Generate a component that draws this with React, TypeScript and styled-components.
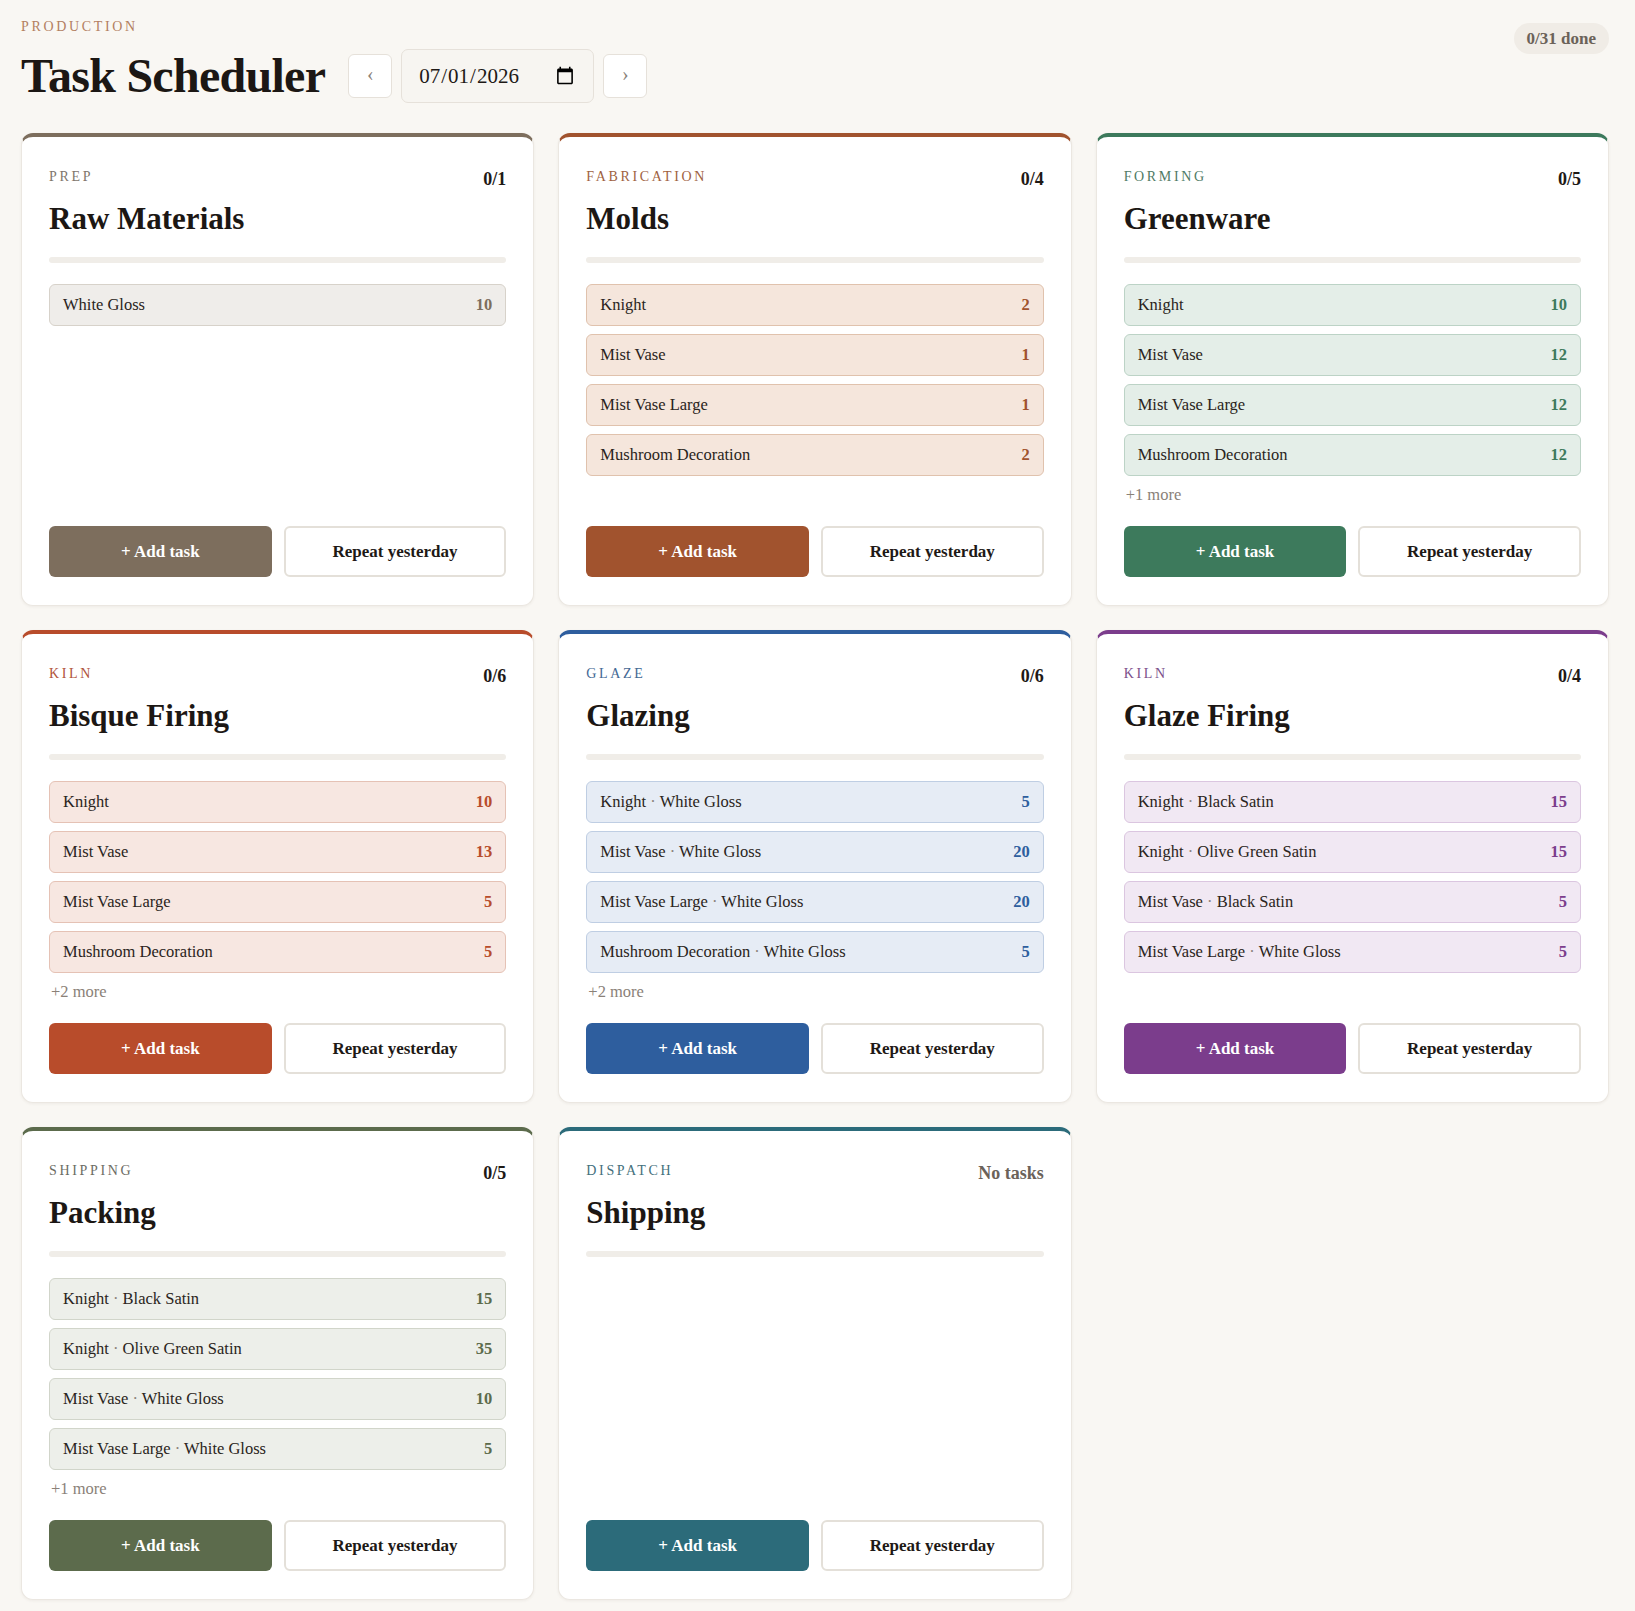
import React from "react";
import styled, { createGlobalStyle } from "styled-components";

type Task = { product: string; variant?: string; qty: number };

type Stage = {
  id: string;
  group: string;
  title: string;
  accent: string;
  label: string;
  rowBg: string;
  rowBorder: string;
  tasks: Task[];
  more?: number;
};

const serif = `"Liberation Serif", "Times New Roman", Times, serif`;

const stages: Stage[] = [
  {
    id: "raw",
    group: "PREP",
    title: "Raw Materials",
    accent: "#7d6e5d",
    label: "#7f766c",
    rowBg: "#efedea",
    rowBorder: "#d7d2ca",
    tasks: [{ product: "White Gloss", qty: 10 }],
  },
  {
    id: "molds",
    group: "FABRICATION",
    title: "Molds",
    accent: "#a1532e",
    label: "#a0623f",
    rowBg: "#f5e6dc",
    rowBorder: "#e0c2ad",
    tasks: [
      { product: "Knight", qty: 2 },
      { product: "Mist Vase", qty: 1 },
      { product: "Mist Vase Large", qty: 1 },
      { product: "Mushroom Decoration", qty: 2 },
    ],
  },
  {
    id: "greenware",
    group: "FORMING",
    title: "Greenware",
    accent: "#3d7a5c",
    label: "#4f7a65",
    rowBg: "#e4eee8",
    rowBorder: "#bcd3c6",
    tasks: [
      { product: "Knight", qty: 10 },
      { product: "Mist Vase", qty: 12 },
      { product: "Mist Vase Large", qty: 12 },
      { product: "Mushroom Decoration", qty: 12 },
    ],
    more: 1,
  },
  {
    id: "bisque",
    group: "KILN",
    title: "Bisque Firing",
    accent: "#b84c2b",
    label: "#b0523a",
    rowBg: "#f7e7e1",
    rowBorder: "#e5c2b5",
    tasks: [
      { product: "Knight", qty: 10 },
      { product: "Mist Vase", qty: 13 },
      { product: "Mist Vase Large", qty: 5 },
      { product: "Mushroom Decoration", qty: 5 },
    ],
    more: 2,
  },
  {
    id: "glazing",
    group: "GLAZE",
    title: "Glazing",
    accent: "#2e5e9e",
    label: "#436894",
    rowBg: "#e6ecf5",
    rowBorder: "#bfcee3",
    tasks: [
      { product: "Knight", variant: "White Gloss", qty: 5 },
      { product: "Mist Vase", variant: "White Gloss", qty: 20 },
      { product: "Mist Vase Large", variant: "White Gloss", qty: 20 },
      { product: "Mushroom Decoration", variant: "White Gloss", qty: 5 },
    ],
    more: 2,
  },
  {
    id: "glaze-firing",
    group: "KILN",
    title: "Glaze Firing",
    accent: "#7b3d8c",
    label: "#7c4e8a",
    rowBg: "#f1e8f3",
    rowBorder: "#dbc6e0",
    tasks: [
      { product: "Knight", variant: "Black Satin", qty: 15 },
      { product: "Knight", variant: "Olive Green Satin", qty: 15 },
      { product: "Mist Vase", variant: "Black Satin", qty: 5 },
      { product: "Mist Vase Large", variant: "White Gloss", qty: 5 },
    ],
  },
  {
    id: "packing",
    group: "SHIPPING",
    title: "Packing",
    accent: "#5c6b4c",
    label: "#6c6c64",
    rowBg: "#edefea",
    rowBorder: "#d1d5ca",
    tasks: [
      { product: "Knight", variant: "Black Satin", qty: 15 },
      { product: "Knight", variant: "Olive Green Satin", qty: 35 },
      { product: "Mist Vase", variant: "White Gloss", qty: 10 },
      { product: "Mist Vase Large", variant: "White Gloss", qty: 5 },
    ],
    more: 1,
  },
  {
    id: "shipping",
    group: "DISPATCH",
    title: "Shipping",
    accent: "#2c6b7a",
    label: "#44707c",
    rowBg: "#e6eff1",
    rowBorder: "#bfd5da",
    tasks: [],
  },
];

const totalTasks = stages.reduce(
  (sum, s) => sum + s.tasks.length + (s.more ?? 0),
  0
);

const App = () => {
  return (
    <Page>
      <GlobalStyle />
      <Header>
        <div>
          <Eyebrow>PRODUCTION</Eyebrow>
          <TitleRow>
            <PageTitle>Task Scheduler</PageTitle>
            <DateNav>
              <NavButton aria-label="Previous day">‹</NavButton>
              <DateInput type="date" defaultValue="2026-07-01" />
              <NavButton aria-label="Next day">›</NavButton>
            </DateNav>
          </TitleRow>
        </div>
        <DonePill>0/{totalTasks} done</DonePill>
      </Header>

      <Board>
        {stages.map((stage) => {
          const count = stage.tasks.length + (stage.more ?? 0);
          return (
            <Card key={stage.id} $accent={stage.accent}>
              <CardHead>
                <GroupLabel $color={stage.label}>{stage.group}</GroupLabel>
                {count > 0 ? (
                  <Count>0/{count}</Count>
                ) : (
                  <Count $muted>No tasks</Count>
                )}
              </CardHead>
              <CardTitle>{stage.title}</CardTitle>
              <Progress />
              <TaskList>
                {stage.tasks.map((task, i) => (
                  <TaskRow
                    key={i}
                    $bg={stage.rowBg}
                    $border={stage.rowBorder}
                  >
                    <TaskName>
                      {task.product}
                      {task.variant && (
                        <>
                          <Sep> · </Sep>
                          {task.variant}
                        </>
                      )}
                    </TaskName>
                    <Qty $color={stage.accent}>{task.qty}</Qty>
                  </TaskRow>
                ))}
                {stage.more ? <More>+{stage.more} more</More> : null}
              </TaskList>
              <Actions>
                <AddButton $accent={stage.accent}>+ Add task</AddButton>
                <RepeatButton>Repeat yesterday</RepeatButton>
              </Actions>
            </Card>
          );
        })}
      </Board>
    </Page>
  );
};

const GlobalStyle = createGlobalStyle`
  html, body {
    margin: 0;
    padding: 0;
    background: #f9f7f3;
  }

  body {
    font-family: ${serif};
    color: #1e1916;
  }

  * {
    box-sizing: border-box;
  }
`;

const Page = styled.div`
  padding: 19px 26px 24px 21px;
  min-height: 100vh;
  background: #f9f7f3;
`;

const Header = styled.header`
  display: flex;
  justify-content: space-between;
  align-items: flex-start;
  margin-bottom: 30px;
`;

const Eyebrow = styled.div`
  font-size: 14px;
  line-height: 16px;
  letter-spacing: 0.19em;
  color: #b37f61;
`;

const TitleRow = styled.div`
  display: flex;
  align-items: center;
  margin-top: 14px;
  height: 54px;
`;

const PageTitle = styled.h1`
  margin: 0 23px 0 0;
  font-size: 48px;
  line-height: 52px;
  font-weight: 700;
  letter-spacing: -0.015em;
  color: #1c1714;
`;

const DateNav = styled.div`
  display: flex;
  align-items: center;
  gap: 9px;
`;

const NavButton = styled.button`
  width: 44px;
  height: 44px;
  display: flex;
  align-items: center;
  justify-content: center;
  padding: 0 0 3px;
  border: 1px solid #e6e1da;
  border-radius: 6px;
  background: #ffffff;
  color: #8a8178;
  font-family: ${serif};
  font-size: 20px;
  cursor: pointer;
`;

const DateInput = styled.input`
  width: 193px;
  height: 54px;
  padding: 0 16px;
  border: 1px solid #e6e1da;
  border-radius: 7px;
  background: #f7f5f1;
  color: #1e1916;
  font-family: ${serif};
  font-size: 21px;
  outline: none;

  &::-webkit-calendar-picker-indicator {
    width: 20px;
    height: 20px;
    margin-left: 0;
  }
`;

const DonePill = styled.div`
  margin-top: 4px;
  padding: 6px 13px;
  border-radius: 999px;
  background: #f0ece6;
  color: #6b6259;
  font-size: 17px;
  line-height: 19px;
  font-weight: 700;
`;

const Board = styled.main`
  display: grid;
  grid-template-columns: repeat(3, 1fr);
  gap: 24px;
  align-items: stretch;
`;

const Card = styled.section<{ $accent: string }>`
  display: flex;
  flex-direction: column;
  padding: 30px 27px 28px;
  background: #ffffff;
  border: 1px solid #ebe7e1;
  border-top: 4px solid ${(p) => p.$accent};
  border-radius: 12px;
  box-shadow: 0 1px 3px rgba(60, 45, 30, 0.06);
`;

const CardHead = styled.div`
  display: flex;
  justify-content: space-between;
  align-items: flex-start;
  height: 23px;
`;

const GroupLabel = styled.div<{ $color: string }>`
  font-size: 14px;
  line-height: 20px;
  letter-spacing: 0.19em;
  color: ${(p) => p.$color};
`;

const Count = styled.div<{ $muted?: boolean }>`
  padding-top: 2px;
  font-size: 18px;
  line-height: 20px;
  font-weight: 700;
  color: ${(p) => (p.$muted ? "#6b6259" : "#1e1916")};
`;

const CardTitle = styled.h2`
  margin: 11px 0 0;
  font-size: 31px;
  line-height: 36px;
  font-weight: 700;
  color: #1c1714;
`;

const Progress = styled.div`
  margin-top: 20px;
  height: 6px;
  border-radius: 3px;
  background: #f0ede8;
`;

const TaskList = styled.div`
  display: flex;
  flex-direction: column;
  gap: 8px;
  margin-top: 21px;
`;

const TaskRow = styled.div<{ $bg: string; $border: string }>`
  display: flex;
  align-items: center;
  justify-content: space-between;
  height: 42px;
  padding: 0 13px;
  background: ${(p) => p.$bg};
  border: 1px solid ${(p) => p.$border};
  border-radius: 6px;
`;

const TaskName = styled.span`
  font-size: 16.5px;
  color: #2a2420;
`;

const Sep = styled.span`
  color: #8a8178;
`;

const Qty = styled.span<{ $color: string }>`
  font-size: 16.5px;
  font-weight: 700;
  color: ${(p) => p.$color};
`;

const More = styled.div`
  padding: 1px 0 0 2px;
  font-size: 16.5px;
  line-height: 19px;
  color: #8a8178;
`;

const Actions = styled.div`
  display: grid;
  grid-template-columns: 1fr 1fr;
  gap: 12px;
  margin-top: auto;
  padding-top: 22px;
`;

const ButtonBase = styled.button`
  height: 51px;
  border-radius: 6px;
  font-family: ${serif};
  font-size: 17px;
  font-weight: 700;
  cursor: pointer;
`;

const AddButton = styled(ButtonBase)<{ $accent: string }>`
  border: none;
  background: ${(p) => p.$accent};
  color: #ffffff;
`;

const RepeatButton = styled(ButtonBase)`
  border: 2px solid #e4e0d9;
  background: #ffffff;
  color: #1e1916;
`;

export default App;
